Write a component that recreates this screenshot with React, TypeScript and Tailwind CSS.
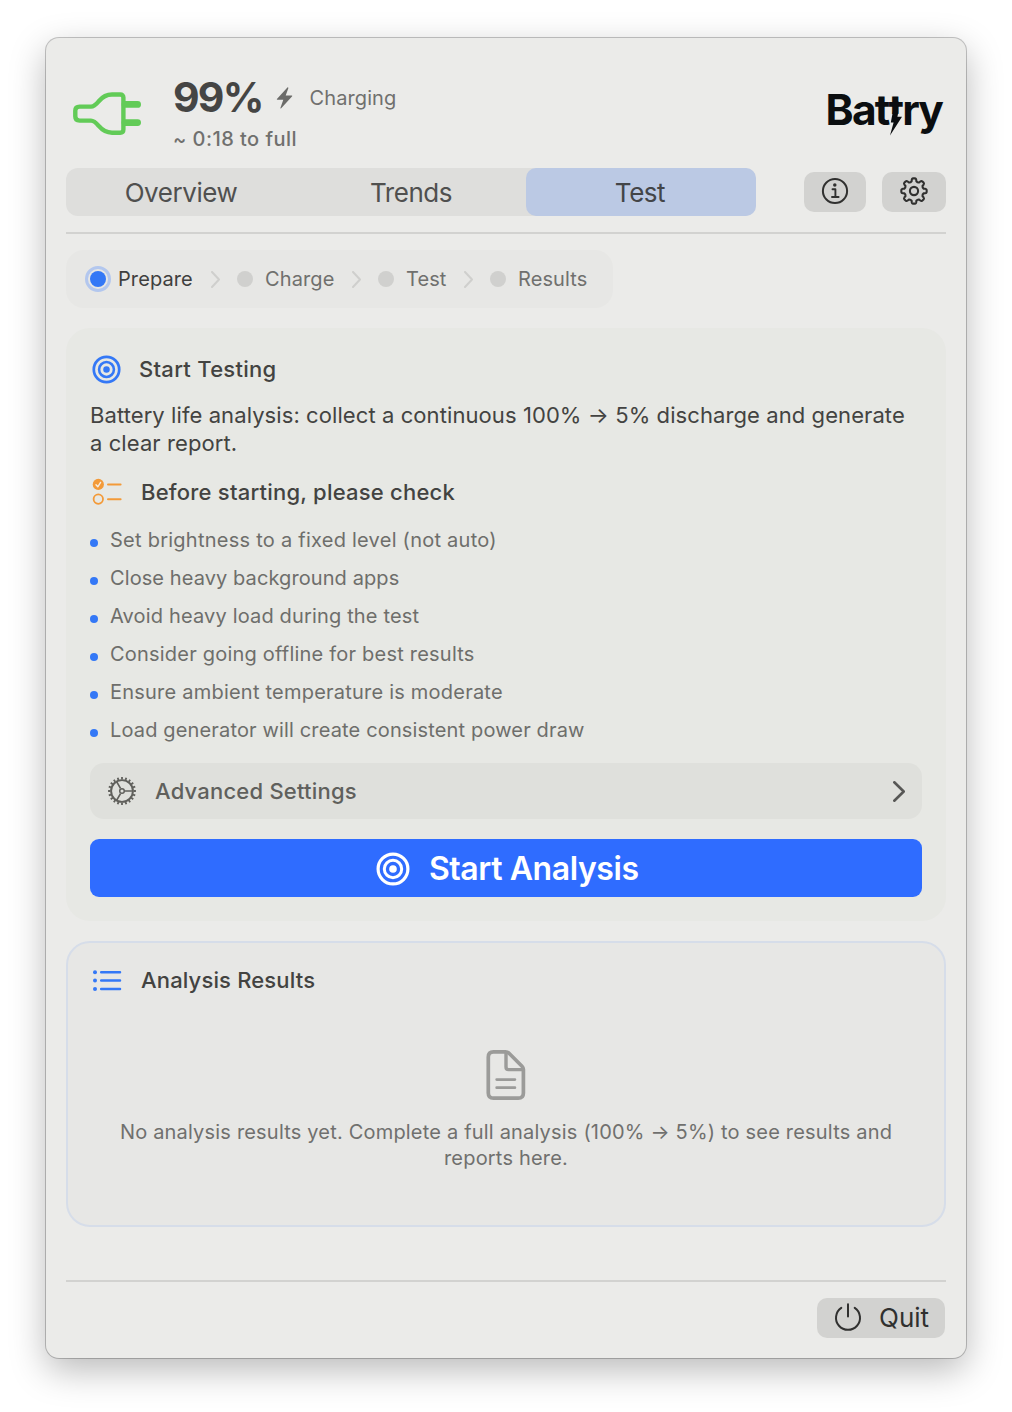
import type { ReactNode } from 'react';
import clsx from 'clsx';

const checklist = [
  { text: 'Set brightness to a fixed level (not auto)', tracking: 'tracking-[0.25px]' },
  { text: 'Close heavy background apps', tracking: 'tracking-[0.09px]' },
  { text: 'Avoid heavy load during the test', tracking: 'tracking-[0.16px]' },
  { text: 'Consider going offline for best results', tracking: 'tracking-[0.21px]' },
  { text: 'Ensure ambient temperature is moderate', tracking: 'tracking-[0.22px]' },
  { text: 'Load generator will create consistent power draw', tracking: 'tracking-[0.15px]' },
];

const steps = [
  { label: 'Prepare', width: 'w-[75px]' },
  { label: 'Charge', width: 'w-[69px]' },
  { label: 'Test', width: 'w-[40px]' },
  { label: 'Results', width: 'w-[72px]' },
];

const tabs = ['Overview', 'Trends', 'Test'];

const polar = (r: number, deg: number, c: number) => {
  const a = (deg * Math.PI) / 180;
  return `${(c + r * Math.cos(a)).toFixed(2)} ${(c + r * Math.sin(a)).toFixed(2)}`;
};

// Outline of a gear with eight rounded teeth.
const gearPath = (() => {
  const c = 15;
  let d = '';
  for (let i = 0; i < 8; i++) {
    const a = i * 45 - 90;
    d += `${i === 0 ? 'M' : 'L'}${polar(9.9, a - 14, c)}`;
    d += `L${polar(11.4, a - 11.5, c)}Q${polar(12.7, a - 9.5, c)} ${polar(12.7, a - 5, c)}`;
    d += `L${polar(12.7, a + 5, c)}Q${polar(12.7, a + 9.5, c)} ${polar(11.4, a + 11.5, c)}`;
    d += `L${polar(9.9, a + 14, c)}Q${polar(9, a + 22.5, c)} ${polar(9.9, a + 31, c)}`;
  }
  return d + 'Z';
})();

const cogTeeth = Array.from({ length: 20 }, (_, i) => `M${polar(11.5, i * 18, 15)}L${polar(13.9, i * 18, 15)}`).join('');

function PlugIcon() {
  return (
    <svg width="70" height="46" viewBox="0 0 70 46" fill="none" stroke="#62cb57">
      <path
        d="M19 15.6H7.6Q3.3 15.6 3.3 19.6V25.6Q3.3 29.6 7.6 29.6H19C22.5 29.6 24.5 32.2 27 35.2C31 40 34.5 41.7 40 41.7H48.2Q51.4 41.7 51.4 38.6V6.6Q51.4 3.5 48.2 3.5H40C34.5 3.5 31 5.2 27 10C24.5 13 22.5 15.6 19 15.6Z"
        strokeWidth="4.4"
      />
      <path d="M53 13.4H65.6M53 31.6H65.6" strokeWidth="6.8" strokeLinecap="round" />
    </svg>
  );
}

function BoltIcon() {
  return (
    <svg width="18" height="22" viewBox="0 0 18 22" fill="#6b6b69">
      <path d="M11.4.4.9 12.1Q.6 12.7 1.3 12.7H7.3L4.4 20.9Q4.4 21.7 5.2 21.3L16.2 9.2Q16.5 8.6 15.8 8.6H9.7L12.4.9Q12.2 0 11.4.4Z" />
    </svg>
  );
}

function TargetIcon({ size, color }: { size: number; color: string }) {
  return (
    <svg width={size} height={size} viewBox="0 0 34 34" fill="none" stroke={color}>
      <circle cx="17" cy="17" r="14.9" strokeWidth="3.2" />
      <circle cx="17" cy="17" r="8.7" strokeWidth="3" />
      <circle cx="17" cy="17" r="3.8" fill={color} stroke="none" />
    </svg>
  );
}

function InfoIcon() {
  return (
    <svg width="30" height="30" viewBox="0 0 30 30" fill="none" stroke="#30302f">
      <circle cx="15" cy="15" r="12.1" strokeWidth="2" />
      <circle cx="14.8" cy="9.1" r="1.75" fill="#30302f" stroke="none" />
      <path d="M12.5 13.3H15.4V21M12 21H18.6" strokeWidth="1.9" strokeLinecap="round" strokeLinejoin="round" />
    </svg>
  );
}

function GearIcon() {
  return (
    <svg width="30" height="30" viewBox="0 0 30 30" fill="none" stroke="#30302f" strokeWidth="2.1" strokeLinejoin="round">
      <path d={gearPath} />
      <circle cx="15" cy="15" r="4.1" />
    </svg>
  );
}

function CogIcon() {
  return (
    <svg width="30" height="30" viewBox="0 0 30 30" fill="none" stroke="#60605c">
      <circle cx="15" cy="15" r="10.9" strokeWidth="1.9" />
      <path d={cogTeeth} strokeWidth="1.8" />
      <circle cx="15" cy="15" r="2.3" strokeWidth="1.5" />
      <path
        d={`M${polar(3, 0, 15)}L${polar(10.5, 0, 15)}M${polar(3, 120, 15)}L${polar(10.5, 120, 15)}M${polar(3, 240, 15)}L${polar(10.5, 240, 15)}`}
        strokeWidth="1.7"
      />
    </svg>
  );
}

function ChecklistIcon() {
  return (
    <svg width="32" height="30" viewBox="0 0 32 30" fill="none" stroke="#f39a38" strokeLinecap="round">
      <circle cx="8.3" cy="7.4" r="5.6" fill="#f39a38" stroke="none" />
      <path d="M6 7.8 7.8 9.8 10.6 5.4" stroke="#f6ece0" strokeWidth="1.4" strokeLinejoin="round" />
      <circle cx="8.3" cy="22.1" r="4.7" strokeWidth="1.8" />
      <path d="M18 7.6H30.6M18 22.2H30.6" strokeWidth="2" />
    </svg>
  );
}

function ListIcon() {
  return (
    <svg width="32" height="24" viewBox="0 0 32 24" fill="#3478f6" stroke="#3478f6">
      <g stroke="none">
        <circle cx="5" cy="4.2" r="2" />
        <circle cx="5" cy="12.6" r="2" />
        <circle cx="5" cy="21" r="2" />
      </g>
      <path d="M11.2 4.2H30M11.2 12.6H30M11.2 21H30" strokeWidth="2.5" strokeLinecap="round" />
    </svg>
  );
}

function DocumentIcon() {
  return (
    <svg width="40" height="52" viewBox="0 0 40 52" fill="none" stroke="#9b9b99" strokeLinecap="round" strokeLinejoin="round">
      <path
        d="M7.5 2.8H19.5Q21.6 2.8 23 4.2L36 17.2Q37.4 18.6 37.4 20.6V44Q37.4 49.2 32.2 49.2H7.5Q2.3 49.2 2.3 44V8Q2.3 2.8 7.5 2.8Z"
        strokeWidth="3.7"
      />
      <path d="M20 4V18Q20 20.6 22.6 20.6H36" strokeWidth="3.4" />
      <path d="M10.7 30.6H28.9M10.7 38.7H28.9" strokeWidth="2.8" />
    </svg>
  );
}

function PowerIcon() {
  return (
    <svg width="30" height="30" viewBox="0 0 30 30" fill="none" stroke="#30302f" strokeWidth="2" strokeLinecap="round">
      <path d="M8.3 5.9A12 12 0 1 0 21.7 5.9" />
      <path d="M15 2.3V14.6" />
    </svg>
  );
}

function Chevron({ w, h, color, stroke }: { w: number; h: number; color: string; stroke: number }) {
  const p = stroke / 2;
  return (
    <svg width={w} height={h} viewBox={`0 0 ${w} ${h}`} fill="none" stroke={color} strokeWidth={stroke} strokeLinecap="round" strokeLinejoin="round">
      <path d={`M${p} ${p}L${w - p} ${h / 2}L${p} ${h - p}`} />
    </svg>
  );
}

function Logo() {
  return (
    <div className="flex h-[50px] items-center text-[42.5px] font-bold leading-[50px] tracking-[-1.85px] text-[#0b0e10]">
      <span>Bat</span>
      <span className="relative">
        <span className="inline-block [clip-path:inset(0_-2px_21px_-2px)]">t</span>
        <svg className="absolute left-[1.5px] top-[16px]" width="14" height="36" viewBox="0 0 14 36" fill="#0b0e10">
          <path d="M3 0H8.3V11.5L7.4 15.8H12L0 34.6 3.6 21.4H.8L3 10Z" />
        </svg>
      </span>
      <span>ry</span>
    </div>
  );
}

function SectionTitle({ icon, className, children }: { icon: ReactNode; className: string; children: ReactNode }) {
  return (
    <div className={clsx('flex h-[30px] items-center text-[22px] font-medium text-[#434341]', className)}>
      {icon}
      {children}
    </div>
  );
}

export default function App() {
  return (
    <div className="flex h-[1412px] w-[1012px] flex-col bg-white px-[46px] pt-[38px] font-['Inter',sans-serif]">
      <main className="flex h-[1320px] flex-col rounded-[13px] bg-[#ebebe9] px-5 shadow-[0_0_0_1px_rgba(0,0,0,0.22),0_12px_36px_rgba(0,0,0,0.28)]">
        <header className="flex h-[130px] shrink-0">
          <div className="ml-1.5 mt-[53px]">
            <PlugIcon />
          </div>
          <div className="ml-[31px] flex flex-col pt-10">
            <div className="flex h-10 items-center">
              <span className="text-[41px] font-bold tracking-[-1.8px] text-[#454544]">99%</span>
              <span className="ml-[13px]">
                <BoltIcon />
              </span>
              <span className="ml-4 text-[20px] tracking-[0.1px] text-[#70706e]">Charging</span>
            </div>
            <div className="mt-[9px] text-[20px] font-medium leading-6 tracking-[0.45px] text-[#70706e]">~ 0:18 to full</div>
          </div>
          <div className="ml-auto mr-[4px] mt-[47px]">
            <Logo />
          </div>
        </header>

        <nav className="flex h-12 shrink-0 items-center">
          <div className="flex h-12 w-[690px] rounded-[12px] bg-[#dededc]">
            {tabs.map((tab) => (
              <button
                key={tab}
                className={clsx(
                  'flex h-12 w-[230px] items-center justify-center rounded-[10px] pt-0.5 text-[26px] leading-8 tracking-[-0.45px]',
                  tab === 'Test' ? 'bg-[#bbc9e4] pr-0.5 text-[#434548]' : 'text-[#50504f]',
                )}
              >
                {tab}
              </button>
            ))}
          </div>
          <button className="ml-12 flex h-10 w-[62px] items-center justify-center rounded-[10px] bg-[#d2d2d0] pb-0.5">
            <InfoIcon />
          </button>
          <button className="ml-4 flex h-10 w-16 items-center justify-center rounded-[10px] bg-[#d2d2d0] pb-[3px] pr-px">
            <GearIcon />
          </button>
        </nav>

        <div className="mt-4 h-0.5 shrink-0 bg-[#d2d2d0]" />

        <ol className="mt-4 flex h-[58px] w-[547px] shrink-0 items-center rounded-[18px] bg-[#e7e7e5] pl-6">
          {steps.map((step, i) => (
            <li key={step.label} className="flex items-center">
              {i > 0 && (
                <span className="mx-[17.5px]">
                  <Chevron w={9} h={17} color="#cfcfcd" stroke={2} />
                </span>
              )}
              <span
                className={clsx(
                  'size-4 rounded-full',
                  i === 0 ? 'bg-[#3478f6] outline-[3px] outline-offset-2 outline-[#b3c7ee]' : 'bg-[#d0d0ce]',
                )}
              />
              <span
                className={clsx(
                  'ml-3 whitespace-nowrap text-[20px] leading-6 tracking-[0.1px]',
                  step.width,
                  i === 0 ? 'text-[#3f3f3e]' : 'text-[#70706e]',
                )}
              >
                {step.label}
              </span>
            </li>
          ))}
        </ol>

        <section className="mt-5 flex h-[593px] shrink-0 flex-col rounded-[24px] bg-[#e7e8e4] px-6 pt-[26px]">
          <SectionTitle
            className="tracking-[0.28px]"
            icon={
              <span className="ml-[1.5px] mr-[18.5px]">
                <TargetIcon size={29} color="#3478f6" />
              </span>
            }
          >
            Start Testing
          </SectionTitle>
          <p className="mt-[17px] whitespace-nowrap text-[22px] leading-7 tracking-[0.085px] text-[#434341]">
            Battery life analysis: collect a continuous 100% → 5% discharge and generate
            <br />a clear report.
          </p>
          <div className="mt-5">
            <SectionTitle
              className="tracking-[0.22px]"
              icon={
                <span className="mr-[19px]">
                  <ChecklistIcon />
                </span>
              }
            >
              Before starting, please check
            </SectionTitle>
          </div>
          <ul className="mt-[14px]">
            {checklist.map(({ text, tracking }) => (
              <li key={text} className={clsx('flex h-[38px] items-center text-[20px] text-[#6e6e6b]', tracking)}>
                <span className="mr-3 mt-[6px] size-2 rounded-full bg-[#3478f6]" />
                {text}
              </li>
            ))}
          </ul>
          <button className="mt-[14px] flex h-14 shrink-0 items-center rounded-[14px] bg-[#dfe0dc] pl-[17px] pr-[17px] text-[22px] font-medium tracking-[0.21px] text-[#60605c]">
            <CogIcon />
            <span className="ml-[18px]">Advanced Settings</span>
            <span className="ml-auto">
              <Chevron w={12} h={21} color="#575755" stroke={2.6} />
            </span>
          </button>
          <button className="mt-5 flex h-[58px] shrink-0 items-center justify-center rounded-[9px] bg-[#2f6cff] pl-[3px] pt-0.5 text-[32px] font-semibold tracking-[-0.42px] text-white">
            <span className="mr-[18.5px]">
              <TargetIcon size={34} color="#ffffff" />
            </span>
            Start Analysis
          </button>
        </section>

        <section className="mt-5 flex h-[286px] shrink-0 flex-col items-center rounded-[24px] border-2 border-[#d6dde9] bg-[#e7e7e5] px-[22px] pt-[22px]">
          <div className="self-stretch">
            <SectionTitle
              className="tracking-[0.15px]"
              icon={
                <span className="mr-[19px]">
                  <ListIcon />
                </span>
              }
            >
              Analysis Results
            </SectionTitle>
          </div>
          <div className="mt-[54px]">
            <DocumentIcon />
          </div>
          <p className="mt-[18px] whitespace-nowrap text-center text-[20px] leading-[26px] tracking-[0.19px] text-[#70706e]">
            No analysis results yet. Complete a full analysis (100% → 5%) to see results and
            <br />
            reports here.
          </p>
        </section>

        <div className="mt-[53px] h-0.5 shrink-0 bg-[#d2d2d0]" />

        <footer className="mt-4 flex shrink-0 justify-end pr-[1px]">
          <button className="flex h-10 w-32 items-center rounded-[10px] bg-[#d2d2d0] pb-0.5 pl-4 text-[26px] text-[#30302f]">
            <PowerIcon />
            <span className="ml-4">Quit</span>
          </button>
        </footer>
      </main>
    </div>
  );
}
